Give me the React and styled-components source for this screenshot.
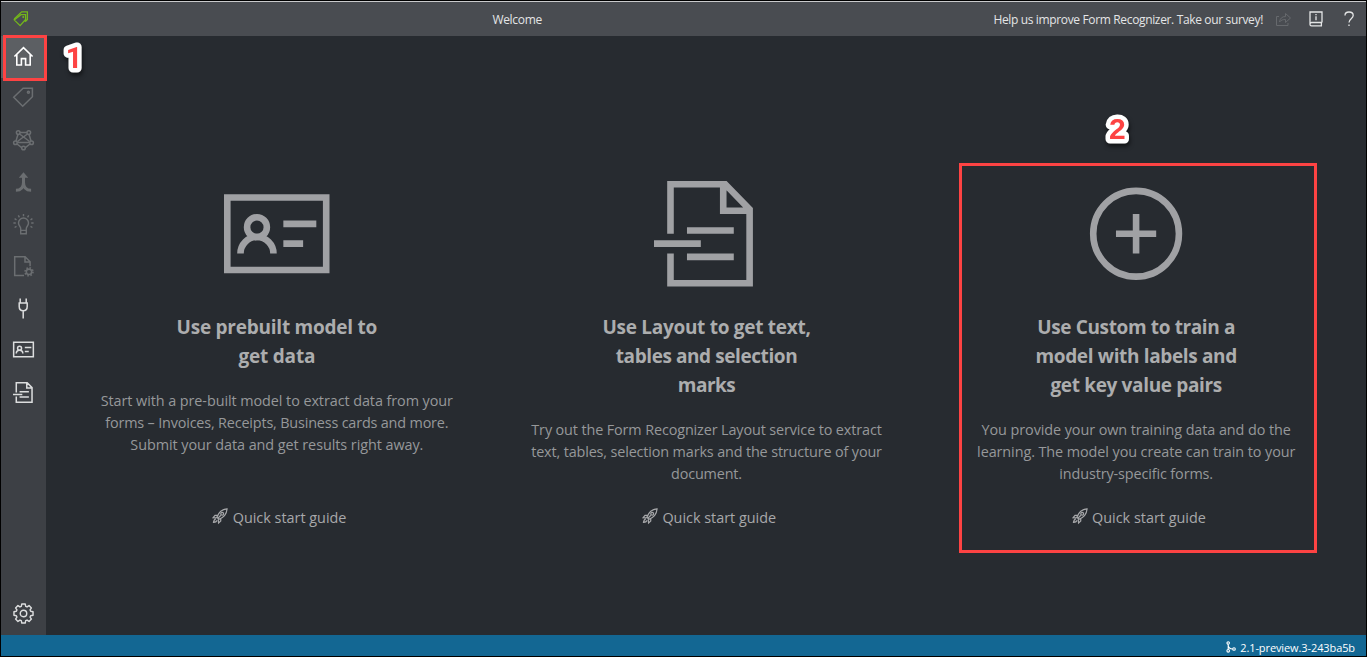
import React from 'react';
import styled, { createGlobalStyle } from 'styled-components';

const GlobalStyle = createGlobalStyle`
  * { box-sizing: border-box; }
  body { margin: 0; background: #000; font-family: "Open Sans", "Noto Sans", sans-serif; }
`;

const Frame = styled.div`
  position: relative;
  display: flex;
  flex-direction: column;
  width: 1367px;
  height: 657px;
  overflow: hidden;
  background: #272b30;
  border: 1px solid #000;
`;

const TopBar = styled.header`
  display: flex;
  align-items: center;
  flex: none;
  height: 35px;
  padding: 0 11px 0 12px;
  border-top: 1px solid #c9cacc;
  background: #494c51;
  color: #e4e5e6;
  font-size: 12px;
`;

const PageTitle = styled.div`
  flex: 1;
  padding-left: 11px;
  text-align: center;
  letter-spacing: -0.3px;
`;

const Actions = styled.div`
  display: flex;
  align-items: center;
`;

const Survey = styled.span`
  margin-right: 12px;
  white-space: nowrap;
  letter-spacing: -0.35px;
`;

const Middle = styled.div`
  display: flex;
  flex: 1;
  min-height: 0;
`;

const SideBar = styled.nav`
  display: flex;
  flex-direction: column;
  flex: none;
  width: 45px;
  background: #3d4045;
`;

const NavItem = styled.div`
  display: flex;
  align-items: center;
  justify-content: center;
  height: 42px;
  padding-bottom: ${(p) => (p.$raised ? '3px' : '1px')};
  background: ${(p) => (p.$active ? '#5c5f63' : 'transparent')};
  color: ${(p) => (p.$active ? '#fff' : p.$disabled ? '#6b6e71' : '#dcddde')};
  margin-top: ${(p) => (p.$last ? 'auto' : '0')};
`;

const Main = styled.main`
  display: flex;
  flex: 1;
  padding: 144.5px 15px 0 16px;
`;

const Card = styled.section`
  display: flex;
  flex: 1;
  flex-direction: column;
  align-items: center;
  height: 347.5px;
  text-align: center;
  color: #a0a1a4;
`;

const Title = styled.h2`
  margin: 27px 0 0;
  color: #acadae;
  font-size: 19px;
  font-weight: 700;
  line-height: 29px;
`;

const Description = styled.p`
  margin: 19px 0 0;
  color: #96989a;
  font-size: 14.4px;
  line-height: 22px;
`;

const Line = styled.span`
  display: block;
  white-space: nowrap;
  letter-spacing: ${(p) => p.$track || 0}px;
`;

const Guide = styled.a`
  display: flex;
  align-items: center;
  gap: 4.5px;
  height: 22px;
  margin-top: auto;
  padding-left: 5px;
  color: #a7a8aa;
  font-size: 14.4px;
  white-space: nowrap;
`;

const StatusBar = styled.footer`
  display: flex;
  align-items: center;
  justify-content: flex-end;
  gap: 4px;
  flex: none;
  height: 21px;
  padding: 3px 11px 0 0;
  background: #136793;
  color: #fff;
  font-size: 11px;
  letter-spacing: -0.1px;
`;

const Highlight = styled.div`
  position: absolute;
  left: ${(p) => p.$x - 1}px;
  top: ${(p) => p.$y - 1}px;
  width: ${(p) => p.$w}px;
  height: ${(p) => p.$h}px;
  border: 3px solid #fd4343;
`;

const Badge = styled.svg`
  position: absolute;
  left: ${(p) => p.$x - 1}px;
  top: ${(p) => p.$y - 1}px;
  overflow: visible;
  filter: drop-shadow(1px 3px 2px rgba(0, 0, 0, 0.55));
`;

const BadgeText = styled.text`
  fill: #fd4343;
  stroke: #fff;
  stroke-width: 9px;
  stroke-linejoin: round;
  paint-order: stroke;
  font-family: ${(p) => p.$family}, sans-serif;
  font-size: ${(p) => p.$size}px;
  font-weight: 700;
`;

const Svg = styled.svg`
  display: block;
  flex: none;
  fill: none;
  stroke: currentColor;
  overflow: visible;
`;

const RocketSvg = styled(Svg)`
  position: relative;
  top: -1px;
`;

const ContactCard = ({ size, weight = 1 }) => (
  <Svg width={size} height={size} viewBox="0 0 16 16" strokeWidth={weight}>
    <path d="M.5 2.5h15v11H.5zM9 6.5h5M9 9.5h3" />
    <circle cx="5" cy="7" r="1.5" />
    <path d="M2.5 11a2.5 2.5 0 0 1 5 0" />
  </Svg>
);

const LayoutDoc = ({ size, weight = 1 }) => (
  <Svg width={size} height={size} viewBox="0 0 16 16" strokeWidth={weight}>
    <path d="M2.5 8V.5h8.3l3.7 3.8v11.2h-12V11M10.5.5v4h4M5 7.5h7.1M0 9.5h7.1M5 11.5h7.1" />
  </Svg>
);

const AddCircle = ({ size }) => (
  <Svg width={size} height={size} viewBox="0 0 16 16">
    <circle cx="8.05" cy="8" r="6.5" />
    <path d="M5 8h6.1M8.05 5v6" />
  </Svg>
);

const Home = () => (
  <Svg width="21" height="21" viewBox="0 0 21 21" strokeWidth="1.6">
    <path d="M1.4 10.5 10.5 1.6l9.1 8.9M3.8 8.5v10.5h4.6v-6.4h4.2v6.4h4.6V8.5" />
  </Svg>
);

const Tag = () => (
  <Svg width="21" height="21" viewBox="0 0 21 21" strokeWidth="1.5">
    <path d="M10.1 1.2h9.3v8.6l-9.7 9.5-9-9z" />
    <circle cx="15.4" cy="5.2" r="1" />
  </Svg>
);

const Network = () => (
  <Svg width="21" height="21" viewBox="0 0 21 21" strokeWidth="1.5">
    <path d="M7 2.5h7M5 4.3 3 11M16 4.3l2 6.7M6.6 4l10 7.5M14.4 4l-10 7.5M4.4 12.5h12.2M4 14l4.7 3.6M17 14l-4.7 3.6" />
    <circle cx="5.2" cy="2.6" r="1.8" />
    <circle cx="15.8" cy="2.6" r="1.8" />
    <circle cx="2.4" cy="12.7" r="1.8" />
    <circle cx="18.6" cy="12.7" r="1.8" />
    <circle cx="10.5" cy="18" r="1.8" />
  </Svg>
);

const Merge = () => (
  <Svg width="21" height="21" viewBox="0 0 21 21" strokeWidth="3">
    <path d="M10.5 2v8.2c0 5-2.5 8.1-7.6 8.1M10.5 10.2c0 5 2.5 8.1 7.6 8.1" />
    <path d="M10.5.3 15.2 5.8H5.8z" fill="currentColor" stroke="none" />
  </Svg>
);

const Bulb = () => (
  <Svg width="21" height="21" viewBox="0 0 21 21" strokeWidth="1.4">
    <path d="M7.7 14.6c0-2.1-2.2-2.8-2.2-5.6a5 5 0 0 1 10 0c0 2.8-2.2 3.5-2.2 5.6v5.2H7.7zM7.7 16.4h5.6M10.5 0v2.3M5.3 1.4l1.1 2M15.7 1.4l-1.1 2M1.6 4.6l1.9 1.2M19.4 4.6l-1.9 1.2M.4 9h2.4M18.2 9h2.4M1.6 13.5l1.9-1.1M19.4 13.5l-1.9-1.1" />
  </Svg>
);

const gearPath = 'M8.7 1h3.6l.5 2.5 1.4.6 2.1-1.4 2.5 2.5-1.4 2.1.6 1.4 2.5.5v3.6l-2.5.5-.6 1.4 1.4 2.1-2.5 2.5-2.1-1.4-1.4.6-.5 2.5H8.7l-.5-2.5-1.4-.6-2.1 1.4-2.5-2.5 1.4-2.1-.6-1.4L.5 12.8V9.2L3 8.7l.6-1.4-1.4-2.1 2.5-2.5 2.1 1.4 1.4-.6z';

const Gear = () => (
  <Svg width="21" height="21" viewBox="0 0 21 22" strokeWidth="1.5" strokeLinejoin="round">
    <path d={gearPath} />
    <circle cx="10.5" cy="11" r="3.4" />
  </Svg>
);

const DocGear = () => (
  <Svg width="21" height="21" viewBox="0 0 21 21" strokeWidth="1.5">
    <path d="M11 19.5H1.7V.8h10.4l5 5v4.5M12 .8V6h5" />
    <circle cx="16" cy="15.8" r="2.7" strokeWidth="1.6" />
    <circle cx="16" cy="15.8" r="4" strokeWidth="1.6" strokeDasharray="1.57 1.57" />
  </Svg>
);

const Plug = () => (
  <Svg width="21" height="21" viewBox="0 0 21 21" strokeWidth="1.5">
    <path d="M7.2.5v4.2M13.2.5v4.2M5.5 5h9.4M6.2 5v3.5c0 2.7 1.4 4.2 4 4.2s4-1.5 4-4.2V5M10.2 12.7v7.8" />
  </Svg>
);

const Logo = () => (
  <Svg width="17" height="17" viewBox="0 0 17 17" strokeWidth="1.25" color="#74b71b">
    <path d="M1.2 8 8.7.9h5.7v6.3" />
    <path d="M8 3.7h4.6v4.8l-5.5 6.2L1.2 8.9zM14.4 6.5v2l-2.2 2.3" />
    <circle cx="10.3" cy="6.1" r=".4" />
  </Svg>
);

const ShareIcon = styled(Svg)`
  margin-right: 17px;
  color: #66696d;
`;

const BookIcon = styled(Svg)`
  margin-right: 20px;
`;

const Rocket = () => (
  <RocketSvg width="16" height="16" viewBox="0 0 17 17" strokeWidth="1.3">
    <path d="M5.2 9.8C6.8 5.3 10.5 1.6 16 1c-.5 5.4-4 9.2-8.5 10.9zM6 7.8H3.2L1.2 10.2l3.6.2M9.3 11v2.8L7 15.9l-.4-3.7M4 11.8c-1.3 0-2.1 1.4-2.4 3.5 2-.2 3.5-1 3.5-2.4M6.4 10.7l3-3" />
    <circle cx="10.8" cy="6.2" r="1.5" />
  </RocketSvg>
);

const Branch = () => (
  <Svg width="10" height="12" viewBox="0 0 10 12" strokeWidth="1.1">
    <circle cx="2.2" cy="2" r="1.2" />
    <circle cx="2.2" cy="9.8" r="1.3" />
    <circle cx="8" cy="8" r="1.3" />
    <path d="M2.2 3.3v5.2M2.2 4c.2 2.6 2 4 4.5 4" />
  </Svg>
);

const cards = [
  {
    Icon: ContactCard,
    title: [['Use prebuilt model to', -0.24], ['get data', -0.2]],
    text: [
      ['Start with a pre-built model to extract data from your', -0.07],
      ['forms – Invoices, Receipts, Business cards and more.', -0.17],
      ['Submit your data and get results right away.', -0.06],
    ],
  },
  {
    Icon: LayoutDoc,
    title: [['Use Layout to get text,', -0.28], ['tables and selection', -0.42], ['marks', -0.5]],
    text: [
      ['Try out the Form Recognizer Layout service to extract', -0.12],
      ['text, tables, selection marks and the structure of your', -0.14],
      ['document.', -0.15],
    ],
  },
  {
    Icon: AddCircle,
    title: [['Use Custom to train a', -0.37], ['model with labels and', -0.35], ['get key value pairs', -0.34]],
    text: [
      ['You provide your own training data and do the', -0.07],
      ['learning. The model you create can train to your', -0.08],
      ['industry-specific forms.', -0.12],
    ],
  },
];

const Lines = ({ items }) => items.map(([text, track]) => <Line key={text} $track={track}>{text}</Line>);

export default function App() {
  return (
    <Frame>
      <GlobalStyle />
      <TopBar>
        <Logo />
        <PageTitle>Welcome</PageTitle>
        <Actions>
          <Survey>Help us improve Form Recognizer. Take our survey!</Survey>
          <ShareIcon width="17" height="16" viewBox="0 0 17 16">
            <path d="M4 5.5H1.5v9h11.5V12M4.5 11c.5-3.5 2.5-5.5 6-5.5V2.5L15.5 7l-5 4.5V8.5c-2.5 0-4.5.5-6 2.5z" />
          </ShareIcon>
          <BookIcon width="14" height="16" viewBox="0 0 14 16" strokeWidth="1.3">
            <path d="M13 11.5V1H1v12.5Q1 14.9 2.5 14.9H13M13 11.5H2.5Q1 11.7 1 13.2M12.4 11.5v3.4M7 3v1.2M7 5.2v4" />
          </BookIcon>
          <Svg width="12" height="16" viewBox="0 0 12 16" strokeWidth="1.3">
            <path d="M2 4.5C2 2.3 3.5 1 6 1s4.2 1.3 4.2 3.5c0 3.2-4.2 3.3-4.2 7M6 13.4v1.5" />
          </Svg>
        </Actions>
      </TopBar>
      <Middle>
        <SideBar>
          <NavItem $active><Home /></NavItem>
          <NavItem $disabled $raised><Tag /></NavItem>
          <NavItem $disabled><Network /></NavItem>
          <NavItem $disabled><Merge /></NavItem>
          <NavItem $disabled><Bulb /></NavItem>
          <NavItem $disabled><DocGear /></NavItem>
          <NavItem><Plug /></NavItem>
          <NavItem $raised><ContactCard size={21} weight={1.15} /></NavItem>
          <NavItem><LayoutDoc size={21} weight={1.15} /></NavItem>
          <NavItem $last><Gear /></NavItem>
        </SideBar>
        <Main>
          {cards.map(({ Icon, title, text }) => (
            <Card key={title[0][0]}>
              <Icon size={105.5} />
              <Title><Lines items={title} /></Title>
              <Description><Lines items={text} /></Description>
              <Guide><Rocket />Quick start guide</Guide>
            </Card>
          ))}
        </Main>
      </Middle>
      <StatusBar><Branch />2.1-preview.3-243ba5b</StatusBar>
      <Highlight $x={3} $y={35} $w={44} $h={46} />
      <Highlight $x={959} $y={163} $w={358} $h={390} />
      <Badge $x={64} $y={43} width="20" height="32">
        <BadgeText x="1.8" y="25.2" $family="Roboto" $size={29}>1</BadgeText>
      </Badge>
      <Badge $x={1105} $y={112} width="24" height="32">
        <BadgeText x="4" y="26.5" $family='"Liberation Sans"' $size={30}>2</BadgeText>
      </Badge>
    </Frame>
  );
}
